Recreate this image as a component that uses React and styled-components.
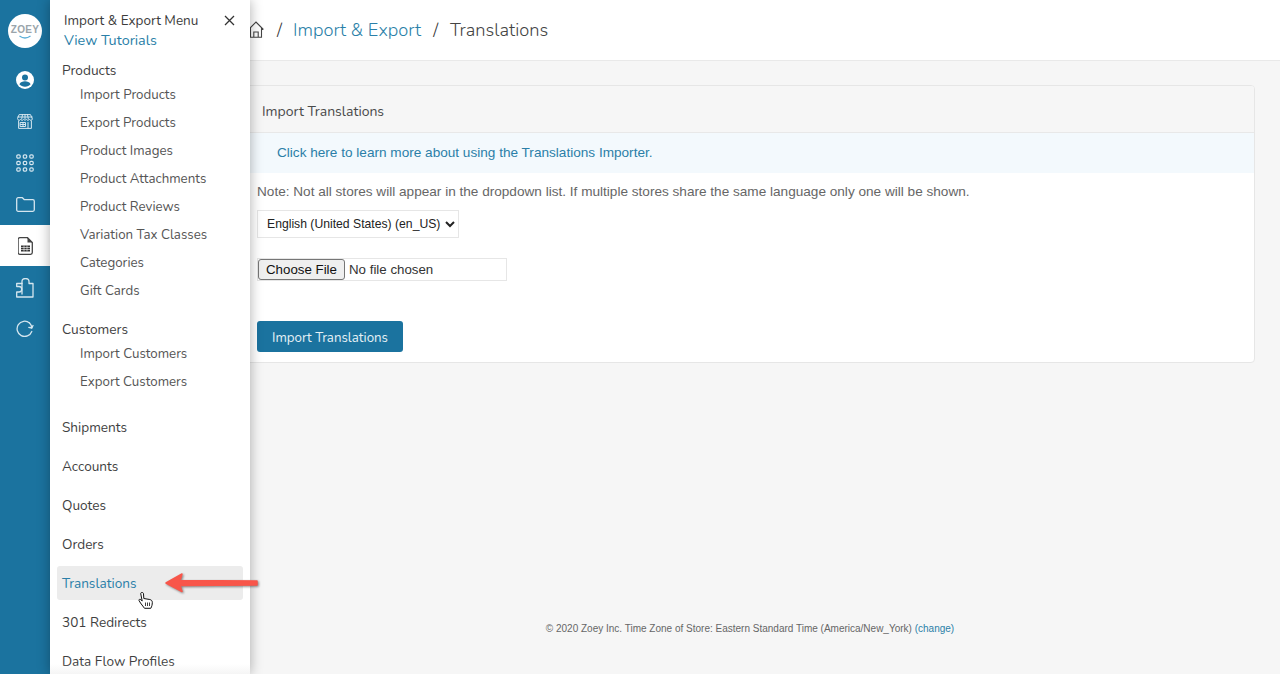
import React from 'react';
import styled, { createGlobalStyle } from 'styled-components';

const uiFont = '"Nunito", "Lato", "Noto Sans", sans-serif';
const arial = '"Liberation Sans", Arial, sans-serif';
const blue = '#1b739f';
const linkBlue = '#2b7fa8';

const GlobalStyle = createGlobalStyle`
  html, body {
    margin: 0;
    height: 100%;
    background: #f6f6f6;
    overflow: hidden;
  }
  * { box-sizing: border-box; }
`;

const Page = styled.div`
  display: flex;
  height: 674px;
  overflow: hidden;
  font-family: ${uiFont};
`;

const Rail = styled.nav`
  width: 50px;
  flex: none;
  background: ${blue};
  display: flex;
  flex-direction: column;
  align-items: center;
  padding-top: 14px;
`;

const Logo = styled.div`
  width: 34px;
  height: 34px;
  border-radius: 50%;
  background: #fff;
  display: flex;
  align-items: center;
  justify-content: center;
  margin-bottom: 11px;
  position: relative;
`;

const LogoText = styled.span`
  font-family: ${arial};
  font-size: 10px;
  font-weight: 700;
  letter-spacing: 0.3px;
  color: #9aa5ab;
  margin-top: -3px;
`;

const LogoSmile = styled.svg`
  position: absolute;
  left: 10px;
  top: 21px;
`;

const RailItem = styled.div`
  width: 50px;
  height: ${({ $h }) => $h || 41}px;
  display: flex;
  align-items: center;
  justify-content: center;
  background: ${({ $active }) => ($active ? '#fff' : 'transparent')};
`;

const Menu = styled.aside`
  width: 200px;
  flex: none;
  background: #fff;
  box-shadow: 0 0 12px rgba(0, 0, 0, 0.32);
  position: relative;
  z-index: 2;
  padding: 0 7px;
  &::after {
    content: '';
    position: absolute;
    left: 0;
    right: 0;
    bottom: 0;
    height: 10px;
    background: linear-gradient(rgba(245, 245, 245, 0), #f5f5f5);
  }
`;

const MenuHead = styled.div`
  padding: 11px 7px 0 7px;
  height: 61px;
  position: relative;
`;

const MenuTitle = styled.div`
  font-size: 13.5px;
  line-height: 20px;
  color: #3c3c3c;
`;

const Tutorials = styled.div`
  font-size: 14.4px;
  line-height: 19px;
  color: ${linkBlue};
`;

const CloseButton = styled.span`
  position: absolute;
  top: 15px;
  right: 8px;
  width: 11px;
  height: 11px;
  display: flex;
`;

const GroupTitle = styled.div`
  font-size: 13.7px;
  line-height: 20px;
  padding-left: 5px;
  color: #3f3f3f;
`;

const SubItem = styled.div`
  font-size: 13.3px;
  line-height: 28px;
  padding-left: 23px;
  color: #555;
`;

const Group = styled.div`
  margin-bottom: ${({ $gap }) => $gap}px;
`;

const TopItem = styled.div`
  height: 34px;
  margin-bottom: 5px;
  padding-left: 5px;
  display: flex;
  align-items: center;
  font-size: 13.6px;
  border-radius: 3px;
  color: ${({ $active }) => ($active ? linkBlue : '#3f3f3f')};
  background: ${({ $active }) => ($active ? '#ececec' : 'transparent')};
`;

const Main = styled.main`
  flex: 1;
  min-width: 0;
  display: flex;
  flex-direction: column;
`;

const Header = styled.header`
  height: 61px;
  background: #fff;
  border-bottom: 1px solid #e9e9e9;
  display: flex;
  align-items: center;
  padding-bottom: 1px;
  font-size: 18.3px;
  font-weight: 300;
  color: #444;
`;

const Crumb = styled.span`
  color: ${({ $link }) => ($link ? linkBlue : '#444')};
`;

const Slash = styled.span`
  margin: 0 ${({ $after }) => $after || 11}px 0 ${({ $before }) => $before || 11}px;
  color: #333;
`;

const HomeIcon = styled.svg`
  margin-left: -2px;
  margin-right: 2px;
  flex: none;
`;

const Card = styled.section`
  margin: 24px 25px 0 -6px;
  height: 278px;
  border: 1px solid #e6e6e6;
  border-radius: 4px;
  background: #fff;
  overflow: hidden;
`;

const CardTitle = styled.div`
  height: 47px;
  background: #f6f6f6;
  border-bottom: 1px solid #e8e8e8;
  padding: 5px 0 0 17px;
  display: flex;
  align-items: center;
  font-size: 14px;
  color: #4a4a4a;
`;

const Notice = styled.div`
  height: 40px;
  background: #f3f9fd;
  padding: 0 0 1px 32px;
  display: flex;
  align-items: center;
  font-family: ${arial};
  font-size: 13.6px;
  color: ${linkBlue};
`;

const CardBody = styled.div`
  padding: 0 12px;
  font-family: ${arial};
`;

const Note = styled.p`
  margin: 11px 0 9px;
  font-size: 13.6px;
  line-height: 16px;
  padding-bottom: 1px;
  color: #666;
`;

const LangSelect = styled.select`
  display: block;
  width: 202px;
  height: 28px;
  padding: 0 0 0 5px;
  font-family: ${arial};
  font-size: 12.2px;
  color: #222;
  background: #fff;
  border: 1px solid #e6e6e6;
  border-radius: 0;
`;

const FileField = styled.input`
  display: block;
  margin-top: 20px;
  width: 250px;
  height: 23px;
  font-family: ${arial};
  font-size: 13.3px;
  color: #333;
  background: #fff;
  border: 1px solid #e6e6e6;
  &::file-selector-button {
    width: 87px;
    height: 21px;
    margin: 0 4px 0 0;
    padding: 0;
    font: inherit;
    color: #111;
    background: #efefef;
    border: 1px solid #767676;
    border-radius: 3px;
  }
`;

const SubmitButton = styled.button`
  display: block;
  margin-top: 40px;
  width: 146px;
  height: 31px;
  padding: 2px 0 0;
  border: 0;
  border-radius: 3px;
  background: ${blue};
  color: #e6f1f6;
  font-family: ${uiFont};
  font-size: 13.3px;
`;

const Footer = styled.footer`
  margin-top: 260px;
  padding-right: 30px;
  text-align: center;
  font-family: ${arial};
  font-size: 10px;
  color: #666;
`;

const FooterLink = styled.span`
  color: ${linkBlue};
`;

const Arrow = styled.svg`
  position: absolute;
  left: 160px;
  top: 570px;
  z-index: 3;
  filter: drop-shadow(1px 1px 1px rgba(0, 0, 0, 0.45));
`;

const HandCursor = styled.svg`
  position: absolute;
  left: 138px;
  top: 591px;
  z-index: 3;
`;

const line = { fill: 'none', stroke: '#d5e6ef', strokeWidth: 1.3, strokeLinecap: 'round', strokeLinejoin: 'round' };

const products = ['Import Products', 'Export Products', 'Product Images', 'Product Attachments', 'Product Reviews', 'Variation Tax Classes', 'Categories', 'Gift Cards'];
const customers = ['Import Customers', 'Export Customers'];
const topItems = ['Shipments', 'Accounts', 'Quotes', 'Orders', 'Translations', '301 Redirects', 'Data Flow Profiles'];

const dots = [];
for (let row = 0; row < 3; row++) {
  for (let col = 0; col < 3; col++) dots.push([col * 6.5 + 1, row * 6.5 + 1]);
}

export default function App() {
  return (
    <Page>
      <GlobalStyle />
      <Rail>
        <Logo>
          <LogoText>ZOEY</LogoText>
          <LogoSmile width="14" height="5" viewBox="0 0 14 5">
            <path d="M1.5 1 Q7 5 12.5 1" fill="none" stroke="#5aaed8" strokeWidth="1.3" />
          </LogoSmile>
        </Logo>
        <RailItem $h={42}>
          <svg width="18" height="18" viewBox="0 0 18 18">
            <circle cx="9" cy="9" r="9" fill="#fff" />
            <circle cx="9" cy="6.6" r="3" fill={blue} />
            <path d="M3.4 13.2c1-2.2 3.2-3 5.6-3s4.6.8 5.6 3c-1.3 1.5-3.3 2.5-5.6 2.5s-4.3-1-5.6-2.5z" fill={blue} />
          </svg>
        </RailItem>
        <RailItem>
          <svg width="16" height="15" viewBox="0 0 16 15" {...line} strokeWidth="1">
            <path d="M2.5.6h11L15.4 5a1.6 1.6 0 0 1-3 .4 1.7 1.7 0 0 1-3 0 1.7 1.7 0 0 1-2.800 0 1.700 1.700 0 0 1-3 0A1.600 1.600 0 0 1 .6 5z" />
            <path d="M1.600 7v7.400h12.800V7M5.500.6 4.700 5M10.500.6l.8 4.400M8 .6V5M.8 3h14.400" />
            <path d="M3.500 8.500h5v4h-5zM6 8.500v4M3.500 10.500h5M11 8.500v5.900" />
          </svg>
        </RailItem>
        <RailItem>
          <svg width="18" height="18" viewBox="0 0 18 18" fill="none" stroke="#d5e6ef" strokeWidth="1.200">
            {dots.map(([x, y]) => (
              <rect key={`${x}-${y}`} x={x - 0.2} y={y - 0.2} width="3.400" height="3.400" rx="1.200" />
            ))}
          </svg>
        </RailItem>
        <RailItem $h={42}>
          <svg width="19" height="15" viewBox="0 0 19 15" {...line}>
            <path d="M.7 2.200C.7 1.300 1.300.7 2.200.7h4.200l2 2h8.400c.9 0 1.500.6 1.500 1.500v8.600c0 .9-.6 1.500-1.500 1.500H2.200c-.9 0-1.500-.6-1.500-1.500z" />
          </svg>
        </RailItem>
        <RailItem $active>
          <svg width="15" height="18" viewBox="0 0 15 18">
            <path d="M1.800.7h7.700l4.800 4.800v10c0 1-.7 1.800-1.700 1.800H1.800c-1 0-1.700-.8-1.700-1.800V2.500C.1 1.500.8.700 1.800.700z" fill="#fff" stroke="#444" strokeWidth="1.300" />
            <path d="M9.500.7v4.800h4.800z" fill="#444" />
            <path d="M3 8.500h9v6H3z" fill="#333" />
            <path d="M6 8.500v6M9 8.500v6M3 10.500h9M3 12.500h9" stroke="#fff" strokeWidth=".6" />
          </svg>
        </RailItem>
        <RailItem $h={44}>
          <svg width="18" height="20" viewBox="0 0 18 20" {...line}>
            <path d="M.7 5.500H6V3.500a3.500 3 0 0 1 7 0v2h4V19H.7v-5H3a2.500 2.500 0 0 0 0-5.500H.7z" />
            <path d="M6 5.500V16" />
          </svg>
        </RailItem>
        <RailItem $h={38}>
          <svg width="18" height="18" viewBox="0 0 18 18" {...line}>
            <path d="M15.800 11.500A7.600 7.600 0 1 1 13.500 2.900" />
            <path d="M17 5.500 15.800 8 12.800 7.300" />
            <path d="M13.500 2.900c1.300 1.100 2 2.800 2.300 5" />
          </svg>
        </RailItem>
      </Rail>

      <Menu>
        <MenuHead>
          <MenuTitle>Import &amp; Export Menu</MenuTitle>
          <Tutorials>View Tutorials</Tutorials>
          <CloseButton>
            <svg width="11" height="11" viewBox="0 0 11 11">
              <path d="M1 1l9 9M10 1l-9 9" stroke="#333" strokeWidth="1.300" />
            </svg>
          </CloseButton>
        </MenuHead>
        <Group $gap={15}>
          <GroupTitle>Products</GroupTitle>
          {products.map((name) => <SubItem key={name}>{name}</SubItem>)}
        </Group>
        <Group $gap={14}>
          <GroupTitle>Customers</GroupTitle>
          {customers.map((name) => <SubItem key={name}>{name}</SubItem>)}
        </Group>
        {topItems.map((name) => (
          <TopItem key={name} $active={name === 'Translations'}>{name}</TopItem>
        ))}
      </Menu>

      <Main>
        <Header>
          <HomeIcon width="16" height="17" viewBox="0 0 16 17" fill="none" stroke="#444" strokeWidth="1.100">
            <path d="M.6 8.500 8 1l7.400 7.500M2.500 7v9.200h11V7M5.800 16.200v-5.200h4.400v5.200" />
          </HomeIcon>
          <Slash>/</Slash>
          <Crumb $link>Import &amp; Export</Crumb>
          <Slash $before={12} $after={12}>/</Slash>
          <Crumb>Translations</Crumb>
        </Header>
        <Card>
          <CardTitle>Import Translations</CardTitle>
          <Notice>Click here to learn more about using the Translations Importer.</Notice>
          <CardBody>
            <Note>Note: Not all stores will appear in the dropdown list. If multiple stores share the same language only one will be shown.</Note>
            <LangSelect defaultValue="en_US">
              <option value="en_US">English (United States) (en_US)</option>
            </LangSelect>
            <FileField type="file" />
            <SubmitButton type="button">Import Translations</SubmitButton>
          </CardBody>
        </Card>
        <Footer>
          © 2020 Zoey Inc. Time Zone of Store: Eastern Standard Time (America/New_York) <FooterLink>(change)</FooterLink>
        </Footer>
      </Main>

      <Arrow width="102" height="28" viewBox="0 0 102 28">
        <path d="M6 13 L22 4 L20 10.500 L97 11 L97 15 L20 15.500 L22 21.500 Z" fill="#f8564a" stroke="#f8564a" strokeWidth="1.500" strokeLinejoin="round" />
      </Arrow>
      <HandCursor width="16" height="19" viewBox="0 0 16 19">
        <path d="M4 1.500c1 0 1.500.6 1.500 1.500l.3 4.500 6 1c1.500.4 2.500 1.200 2.500 2.800 0 2.500-.5 4-1.500 6H6.500L2.500 12 1 9.500c-.3-1 .8-1.700 1.800-.8L4.200 10 2.800 3C2.600 2 3 1.500 4 1.500z" fill="#fff" stroke="#111" strokeWidth="1" />
        <path d="M7.500 11.500v3.500M9.500 11.500v3.500M11.500 11.500v3.500" stroke="#111" strokeWidth=".8" />
      </HandCursor>
    </Page>
  );
}
